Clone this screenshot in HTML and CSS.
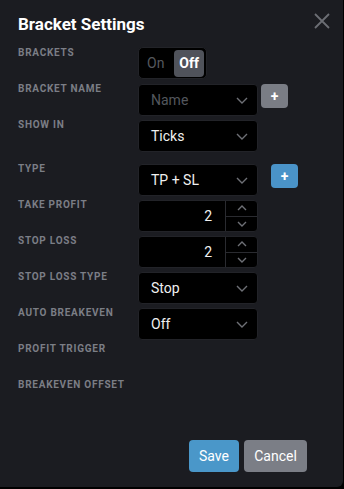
FILE: index.html
```html
<!DOCTYPE html>
<html lang="en">
<head>
    <meta charset="UTF-8">
    <meta name="viewport" content="width=device-width, initial-scale=1.0">
    <title>Bracket Settings</title>
    <link rel="stylesheet" href="styles.css">
</head>
<body>
    <div class="dialog">
        <div class="dialog-header">
            <div class="title">Bracket Settings</div>
            <button class="close" aria-label="Close">
                <svg width="16" height="16" viewBox="0 0 16 16"><path d="M1 1L15 15M15 1L1 15" stroke="#6c6e74" stroke-width="1.8" fill="none"/></svg>
            </button>
        </div>

        <div class="form">
            <div class="row">
                <div class="label">Brackets</div>
                <div class="toggle">
                    <span class="toggle-opt">On</span>
                    <span class="toggle-opt active">Off</span>
                </div>
            </div>

            <div class="row">
                <div class="label">Bracket Name</div>
                <div class="select placeholder">Name
                    <svg class="chev" width="12" height="7" viewBox="0 0 12 7"><path d="M1 1l5 5 5-5" /></svg>
                </div>
                <button class="add grey">+</button>
            </div>

            <div class="row gap-after">
                <div class="label">Show In</div>
                <div class="select">Ticks
                    <svg class="chev" width="12" height="7" viewBox="0 0 12 7"><path d="M1 1l5 5 5-5" /></svg>
                </div>
            </div>

            <div class="row">
                <div class="label">Type</div>
                <div class="select">TP + SL
                    <svg class="chev" width="12" height="7" viewBox="0 0 12 7"><path d="M1 1l5 5 5-5" /></svg>
                </div>
                <button class="add blue">+</button>
            </div>

            <div class="row">
                <div class="label">Take Profit</div>
                <div class="number">
                    <div class="value">2</div>
                    <div class="stepper">
                        <span><svg width="10" height="6" viewBox="0 0 10 6"><path d="M1 5l4-4 4 4" /></svg></span>
                        <span><svg width="10" height="6" viewBox="0 0 10 6"><path d="M1 1l4 4 4-4" /></svg></span>
                    </div>
                </div>
            </div>

            <div class="row">
                <div class="label">Stop Loss</div>
                <div class="number">
                    <div class="value">2</div>
                    <div class="stepper">
                        <span><svg width="10" height="6" viewBox="0 0 10 6"><path d="M1 5l4-4 4 4" /></svg></span>
                        <span><svg width="10" height="6" viewBox="0 0 10 6"><path d="M1 1l4 4 4-4" /></svg></span>
                    </div>
                </div>
            </div>

            <div class="row">
                <div class="label">Stop Loss Type</div>
                <div class="select">Stop
                    <svg class="chev" width="12" height="7" viewBox="0 0 12 7"><path d="M1 1l5 5 5-5" /></svg>
                </div>
            </div>

            <div class="row">
                <div class="label">Auto Breakeven</div>
                <div class="select">Off
                    <svg class="chev" width="12" height="7" viewBox="0 0 12 7"><path d="M1 1l5 5 5-5" /></svg>
                </div>
            </div>

            <div class="row">
                <div class="label">Profit Trigger</div>
            </div>

            <div class="row">
                <div class="label">Breakeven Offset</div>
            </div>
        </div>

        <div class="footer">
            <button class="btn save">Save</button>
            <button class="btn cancel">Cancel</button>
        </div>
    </div>
</body>
</html>
```

FILE: styles.css
```css
body {
    margin: 0;
    padding: 0;
    background-color: #000;
    font-family: Roboto, "Liberation Sans", Arial, sans-serif;
}

.dialog {
    width: 343px;
    height: 487px;
    background-color: #1b1c21;
    border-bottom-right-radius: 6px;
    box-sizing: border-box;
}

.dialog-header {
    display: flex;
    justify-content: space-between;
    align-items: flex-start;
    padding: 14px 13px 0 18px;
    margin-bottom: 13px;
}

.title {
    color: #fff;
    font-size: 17px;
    font-weight: bold;
    line-height: 21px;
}

.close {
    background: transparent;
    border: none;
    padding: 0;
    margin-top: -1px;
    cursor: pointer;
    line-height: 0;
}

.form {
    padding-left: 18px;
}

.row {
    display: flex;
    align-items: flex-start;
    height: 32px;
    margin-bottom: 4px;
}

.row.gap-after {
    margin-bottom: 12px;
}

.label {
    width: 120px;
    flex-shrink: 0;
    color: #7b7e86;
    font-size: 10px;
    font-weight: bold;
    line-height: 10px;
    text-transform: uppercase;
    letter-spacing: 0.75px;
}

/* toggle On / Off */
.toggle {
    display: flex;
    align-items: center;
    width: 69px;
    height: 32px;
    box-sizing: border-box;
    padding: 2px;
    background-color: #000;
    border: 1px solid #222328;
    border-radius: 5px;
    margin-top: -1px;
}

.toggle-opt {
    color: #55585e;
    font-size: 14px;
    padding: 0 6px;
    line-height: 27px;
}

.toggle-opt.active {
    color: #fff;
    font-weight: bold;
    background-color: #50535b;
    border-radius: 4px;
    padding: 0 5px;
    margin-left: auto;
}

.select {
    position: relative;
    width: 120px;
    height: 32px;
    box-sizing: border-box;
    background-color: #000;
    border: 1px solid #222328;
    border-radius: 4px;
    color: #f0f0f0;
    font-size: 14px;
    line-height: 30px;
    padding-left: 12px;
}

.select.placeholder {
    color: #53575d;
}

.chev {
    position: absolute;
    right: 9px;
    top: 12px;
}

.chev path,
.stepper path {
    fill: none;
    stroke: #6e7076;
    stroke-width: 1.4;
}

.add {
    width: 27px;
    height: 24px;
    border: none;
    border-radius: 4px;
    color: #fff;
    font-family: inherit;
    font-size: 14px;
    font-weight: bold;
    line-height: 20px;
    padding: 0;
    cursor: pointer;
}

.add.grey {
    background-color: #7a7d85;
    margin-left: 3px;
}

.add.blue {
    background-color: #4a93c8;
    margin-left: 13px;
}

.number {
    display: flex;
    width: 120px;
    height: 32px;
    box-sizing: border-box;
    background-color: #000;
    border: 1px solid #222328;
    border-radius: 4px;
}

.number .value {
    flex-grow: 1;
    text-align: right;
    color: #f0f0f0;
    font-size: 14px;
    line-height: 30px;
    padding-right: 13px;
}

.stepper {
    width: 31px;
    display: flex;
    flex-direction: column;
    border-left: 1px solid #2a2b30;
}

.stepper span {
    flex: 1;
    display: flex;
    align-items: center;
    justify-content: center;
}

.stepper span:first-child {
    border-bottom: 1px solid #2a2b30;
}

.footer {
    display: flex;
    justify-content: flex-end;
    gap: 5px;
    padding-right: 36px;
    margin-top: 28px;
}

.btn {
    height: 32px;
    border: none;
    border-radius: 4px;
    color: #fff;
    font-family: inherit;
    font-size: 14px;
    padding: 0;
    cursor: pointer;
}

.btn.save {
    background-color: #4a97c9;
    width: 50px;
}

.btn.cancel {
    background-color: #7b7e86;
    width: 63px;
}
```
